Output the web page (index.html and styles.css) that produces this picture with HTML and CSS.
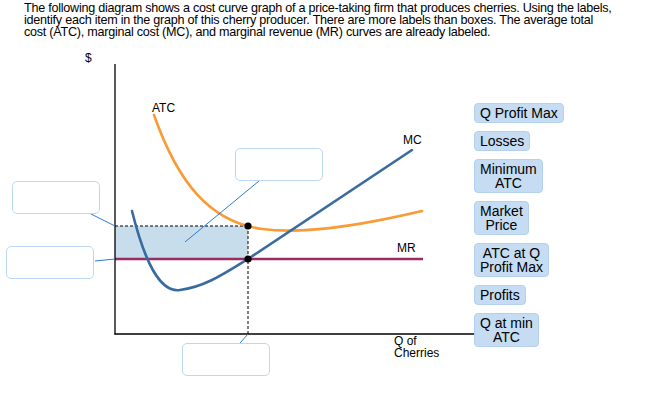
FILE: index.html
```html
<!DOCTYPE html>
<html>
<head>
<meta charset="utf-8">
<link rel="stylesheet" href="styles.css">
</head>
<body>
<p class="intro">The following diagram shows a cost curve graph of a price-taking firm that produces cherries. Using the labels, identify each item in the graph of this cherry producer. There are more labels than boxes. The average total cost (ATC), marginal cost (MC), and marginal revenue (MR) curves are already labeled.</p>
<div class="stage">
  <div class="canvas">
    <svg class="graph" width="474" height="355" viewBox="0 48 474 355" xmlns="http://www.w3.org/2000/svg">
      <rect x="115" y="228" width="133" height="33" fill="#c8ddec"/>
      <line x1="115" y1="228" x2="248" y2="228" stroke="#000" stroke-width="1" stroke-dasharray="3,2"/>
      <line x1="248" y1="228" x2="248" y2="336" stroke="#000" stroke-width="1" stroke-dasharray="3,2"/>
      <path d="M154,117 C178,185 210,224 262,231 C300,236 350,230 422,213" fill="none" stroke="#f99a35" stroke-width="2.6" stroke-linecap="round"/>
      <line x1="115" y1="261" x2="423" y2="261" stroke="#9a2c63" stroke-width="2.6"/>
      <path d="M132,213 C145,265 160,295 180,292 C205,289 225,275 248,261 L412,152" fill="none" stroke="#3a6b9e" stroke-width="2.6" stroke-linecap="round"/>
      <line x1="115" y1="66" x2="115" y2="336.5" stroke="#000" stroke-width="1.3"/>
      <line x1="114.5" y1="336" x2="475" y2="336" stroke="#000" stroke-width="1.3"/>
      <circle cx="248" cy="228" r="3.6" fill="#000"/>
      <circle cx="248" cy="261" r="3.6" fill="#000"/>
      <g stroke="#2b7bd3" stroke-width="1">
        <line x1="91" y1="216" x2="115" y2="228"/>
        <line x1="95" y1="263" x2="115" y2="261"/>
        <line x1="259" y1="183" x2="185" y2="244"/>
        <line x1="240" y1="345" x2="248" y2="336"/>
      </g>
      <g class="axis-text">
        <text x="85" y="64">$</text>
        <text x="152" y="114">ATC</text>
        <text x="403" y="146">MC</text>
        <text x="397" y="254">MR</text>
        <text x="394" y="347">Q of</text>
        <text x="394" y="359">Cherries</text>
      </g>
    </svg>
    <div class="drop drop-a"></div>
    <div class="drop drop-b"></div>
    <div class="drop drop-c"></div>
    <div class="drop drop-d"></div>
  </div>
  <div class="labels">
    <div class="chip">Q Profit Max</div>
    <div class="chip">Losses</div>
    <div class="chip">Minimum<br>ATC</div>
    <div class="chip">Market<br>Price</div>
    <div class="chip">ATC at Q<br>Profit Max</div>
    <div class="chip">Profits</div>
    <div class="chip">Q at min<br>ATC</div>
  </div>
</div>
</body>
</html>
```
FILE: styles.css
```css
html, body {
  margin: 0;
  padding: 0;
  background: #fff;
}
body {
  font-family: "Liberation Sans", Arial, sans-serif;
  color: #000;
  width: 649px;
  height: 403px;
  overflow: hidden;
}
.intro {
  margin: 0;
  padding: 2px 0 0 24px;
  width: 613px;
  font-size: 12.6px;
  letter-spacing: -0.25px;
  line-height: 12px;
  height: 46px;
  box-sizing: border-box;
}
.stage {
  display: flex;
  align-items: flex-start;
  height: 355px;
}
.canvas {
  position: relative;
  width: 474px;
  height: 355px;
  flex: none;
}
.graph {
  display: block;
}
.axis-text text {
  font-family: "Liberation Sans", Arial, sans-serif;
  font-size: 12px;
  fill: #000;
}
.drop {
  position: absolute;
  width: 88px;
  height: 33px;
  box-sizing: border-box;
  background: #fff;
  border: 1px solid #bcd7f1;
  border-radius: 5px;
}
.drop-a { left: 12px; top: 135px; }
.drop-b { left: 6px; top: 200px; }
.drop-c { left: 235px; top: 102px; }
.drop-d { left: 182px; top: 297px; }
.labels {
  display: flex;
  flex-direction: column;
  align-items: flex-start;
  gap: 8px;
  margin-top: 57px;
}
.chip {
  background: #c5dcf2;
  border: 1px solid #b3d1ee;
  border-radius: 4px;
  padding: 2px 5px;
  font-size: 14px;
  line-height: 14px;
  text-align: center;
}
```
